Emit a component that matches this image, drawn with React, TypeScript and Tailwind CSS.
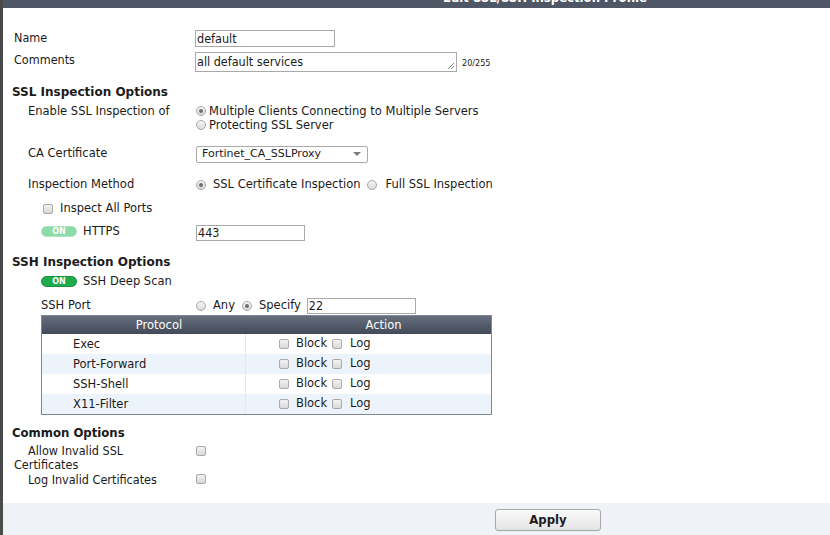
import React from 'react'

const verdana = "font-['DejaVu_Sans',sans-serif]"
const tahoma = "font-['DejaVu_Sans_Condensed','DejaVu_Sans',sans-serif]"

function Radio({ checked = false }: { checked?: boolean }) {
  return (
    <span className="flex h-[10px] w-[10px] shrink-0 items-center justify-center rounded-full border border-[#a7a7a7] bg-linear-to-b from-[#f6f6f6] to-[#dadada]">
      {checked && <span className="h-[4px] w-[4px] rounded-full bg-[#6e6e6e]" />}
    </span>
  )
}

function Check() {
  return (
    <span className="block h-[10px] w-[10px] shrink-0 rounded-[2px] border border-[#aaaaaa] bg-linear-to-b from-[#f2f2f2] to-[#d9d9d9]" />
  )
}

function Toggle({ dim = false }: { dim?: boolean }) {
  return (
    <span
      className={
        dim
          ? 'flex h-[11px] w-[36px] shrink-0 items-center justify-center rounded-full border border-[#a8e6bd] bg-[#8edaa8] text-[8px] font-bold leading-none text-white'
          : 'flex h-[11px] w-[36px] shrink-0 items-center justify-center rounded-full border border-[#14913d] bg-[#1faa4b] text-[8px] font-bold leading-none text-white'
      }
    >
      ON
    </span>
  )
}

function Box({ width, children }: { width: string; children?: React.ReactNode }) {
  return (
    <div className={`${width} h-[16px] border border-[#a9a9a9] bg-white pl-[1px] text-[12.5px] leading-[14px] ${tahoma}`}>
      {children}
    </div>
  )
}

const rows = ['Exec', 'Port-Forward', 'SSH-Shell', 'X11-Filter']

export default function App() {
  return (
    <div className={`flex h-[535px] w-[830px] flex-col overflow-hidden border-l-[3px] border-[#4a4a4a] bg-white text-[#1b1b1b] ${verdana} text-[11.5px]`}>
      {/* title bar, mostly scrolled out of view */}
      <div className="h-[8px] shrink-0 overflow-hidden bg-[#4f5767]">
        <div className={`-mt-[10px] pl-[440px] text-[13px] font-bold leading-[16px] text-white ${tahoma}`}>
          Edit SSL/SSH Inspection Profile
        </div>
      </div>

      <div className="mt-[22px] flex">
        <div className={`w-[192px] shrink-0 pl-[11px] pt-[1px] text-[12.5px] leading-[13px] ${tahoma}`}>Name</div>
        <div className={`h-[17px] w-[140px] border border-[#a9a9a9] pl-[1px] text-[12.5px] leading-[15px] ${tahoma}`}>default</div>
      </div>

      <div className="mt-[5px] flex">
        <div className={`w-[192px] shrink-0 pl-[11px] pt-[1px] text-[12.5px] leading-[13px] ${tahoma}`}>Comments</div>
        <div className="flex items-center">
          <div className={`relative h-[20px] w-[262px] border border-[#a9a9a9] pl-[1px] text-[12.5px] leading-[18px] ${tahoma}`}>
            all default services
            <svg className="absolute bottom-[1px] right-[1px]" width="8" height="8" viewBox="0 0 8 8">
              <path d="M7 1 L1 7 M7 4 L4 7" stroke="#8a8a8a" strokeWidth="1" />
            </svg>
          </div>
          <span className={`ml-[5px] mt-[3px] text-[9px] ${tahoma}`}>20/255</span>
        </div>
      </div>

      <div className="mt-[12px] pl-[9px] pt-[1px] text-[12px] font-bold leading-[14px]">SSL Inspection Options</div>

      <div className="mt-[5px] flex">
        <div className="w-[192px] shrink-0 pl-[25px] leading-[14px]">Enable SSL Inspection of</div>
        <div className="ml-[1px] flex flex-col leading-[14px]">
          <div className="flex items-center gap-[3px]">
            <Radio checked />
            <span>Multiple Clients Connecting to Multiple Servers</span>
          </div>
          <div className="flex items-center gap-[3px]">
            <Radio />
            <span>Protecting SSL Server</span>
          </div>
        </div>
      </div>

      <div className="mt-[14px] flex">
        <div className="w-[192px] shrink-0 pl-[25px] pt-[1px] leading-[13px]">CA Certificate</div>
        <div className="ml-[1px] flex h-[17px] w-[172px] items-center justify-between rounded-[2px] border border-[#aaaaaa] bg-white pl-[5px] pr-[6px] text-[11px]">
          <span>Fortinet_CA_SSLProxy</span>
          <svg width="8" height="5" viewBox="0 0 8 5">
            <path d="M0 0 H8 L4 4 Z" fill="#7a7a7a" />
          </svg>
        </div>
      </div>

      <div className="mt-[15px] flex h-[14px] items-center">
        <div className="w-[192px] shrink-0 pl-[25px]">Inspection Method</div>
        <div className="ml-[1px] flex items-center">
          <Radio checked />
          <span className="ml-[7px]">SSL Certificate Inspection</span>
          <span className="ml-[7px]">
            <Radio />
          </span>
          <span className="ml-[8px]">Full SSL Inspection</span>
        </div>
      </div>

      <div className="mt-[10px] flex h-[14px] items-center pl-[40px]">
        <Check />
        <span className="ml-[7px]">Inspect All Ports</span>
      </div>

      <div className="mt-[9px] flex">
        <div className="flex w-[192px] shrink-0 items-start pl-[38px]">
          <span className="mt-[1px]">
            <Toggle dim />
          </span>
          <span className="ml-[6px] leading-[13px]">HTTPS</span>
        </div>
        <div className="ml-[1px]">
          <Box width="w-[109px]">443</Box>
        </div>
      </div>

      <div className="mt-[13px] pl-[9px] pt-[1px] text-[12px] font-bold leading-[14px]">SSH Inspection Options</div>

      <div className="mt-[6px] flex h-[13px] items-center pl-[38px]">
        <Toggle />
        <span className="ml-[6px]">SSH Deep Scan</span>
      </div>

      <div className="mt-[10px] flex h-[16px]">
        <div className="w-[192px] shrink-0 pl-[38px] pt-[1px] leading-[13px]">SSH Port</div>
        <div className="ml-[1px] flex items-center">
          <Radio />
          <span className="ml-[7px]">Any</span>
          <span className="ml-[7px]">
            <Radio checked />
          </span>
          <span className="ml-[7px]">Specify</span>
          <span className="ml-[6px]">
            <Box width="w-[109px]">22</Box>
          </span>
        </div>
      </div>

      <div className="ml-[38px] mt-[1px] w-[451px] border border-[#7f8794]">
        <div className="grid h-[18px] grid-cols-[234px_1fr] bg-linear-to-b from-[#676f7e] to-[#424a59] text-center leading-[18px] text-white">
          <div>Protocol</div>
          <div>Action</div>
        </div>
        {rows.map((name, i) => (
          <div
            key={name}
            className={`grid h-[20px] grid-cols-[204px_1fr] ${i % 2 === 1 ? 'bg-[#edf3fa]' : 'bg-white'}`}
          >
            <div className="flex items-center border-r border-[#e4e8ee] pl-[31px] pt-[1px]">{name}</div>
            <div className="flex items-center pl-[33px]">
              <Check />
              <span className="ml-[7px]">Block</span>
              <span className="ml-[5px]">
                <Check />
              </span>
              <span className="ml-[8px]">Log</span>
            </div>
          </div>
        ))}
      </div>

      <div className={`mt-[10px] pl-[9px] pt-[1px] text-[13px] font-bold leading-[14px] ${tahoma}`}>Common Options</div>

      <div className={`mt-[4px] flex text-[12.5px] ${tahoma}`}>
        <div className="w-[192px] shrink-0 pl-[11px]">
          <p className="w-[130px] indent-[14px] leading-[14px]">Allow Invalid SSL Certificates</p>
        </div>
        <div className="ml-[1px] mt-[2px]">
          <Check />
        </div>
      </div>

      <div className={`mt-[1px] flex text-[12.5px] ${tahoma}`}>
        <div className="w-[192px] shrink-0 pl-[25px] leading-[14px]">Log Invalid Certificates</div>
        <div className="ml-[1px] mt-[1px]">
          <Check />
        </div>
      </div>

      <div className="flex-1" />

      <div className="flex h-[32px] shrink-0 bg-[#eff3f8]">
        <div
          className={`ml-[492px] mt-[6px] flex h-[22px] w-[106px] items-center justify-center rounded-[3px] border border-[#a6a6a6] bg-linear-to-b from-[#fbfbfb] to-[#e3e3e3] text-[13px] font-bold ${tahoma}`}
        >
          Apply
        </div>
      </div>
    </div>
  )
}
